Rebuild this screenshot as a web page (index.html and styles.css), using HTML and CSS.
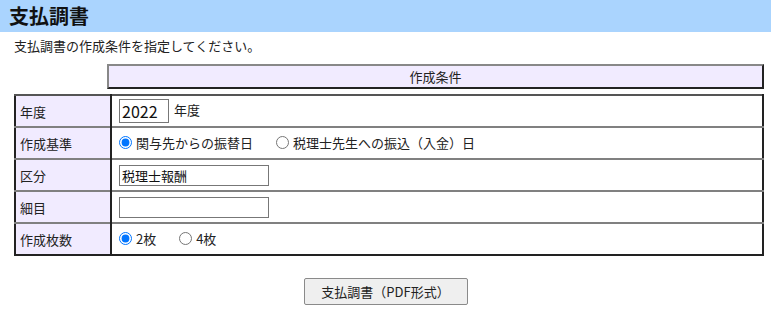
FILE: index.html
```html
<!DOCTYPE html>
<html lang="ja">
<head>
    <meta charset="UTF-8">
    <title>支払調書</title>
    <link rel="stylesheet" href="styles.css">
</head>
<body>
    <h1 class="page-title">支払調書</h1>
    <p class="lead">支払調書の作成条件を指定してください。</p>

    <div class="cond-head">作成条件</div>

    <table class="cond-table">
        <tr>
            <th>年度</th>
            <td><input type="text" class="year-input" value="2022"> 年度</td>
        </tr>
        <tr>
            <th>作成基準</th>
            <td>
                <label class="opt"><input type="radio" name="base" checked>関与先からの振替日</label>
                <label class="opt"><input type="radio" name="base">税理士先生への振込（入金）日</label>
            </td>
        </tr>
        <tr>
            <th>区分</th>
            <td><input type="text" class="text-input" value="税理士報酬"></td>
        </tr>
        <tr>
            <th>細目</th>
            <td><input type="text" class="text-input"></td>
        </tr>
        <tr>
            <th>作成枚数</th>
            <td>
                <label class="opt"><input type="radio" name="count" checked>2枚</label>
                <label class="opt"><input type="radio" name="count">4枚</label>
            </td>
        </tr>
    </table>

    <div class="actions">
        <button class="pdf-btn">支払調書（PDF形式）</button>
    </div>
</body>
</html>
```

FILE: styles.css
```css
* {
    box-sizing: border-box;
}

body {
    margin: 0;
    font-family: "Noto Sans CJK JP", "Noto Sans", sans-serif;
    font-size: 13px;
    color: #222;
    background: #fff;
}

.page-title {
    margin: 0;
    height: 32px;
    padding-left: 9px;
    background: #aad4fe;
    font-size: 20px;
    line-height: 32px;
    font-weight: bold;
    color: #111;
}

.lead {
    margin: 4px 0 0 14px;
    line-height: 20px;
}

.cond-head {
    margin: 8px 7px 0 107px;
    height: 25px;
    line-height: 21px;
    background: #f1ebff;
    border: 2px solid #222;
    border-top-color: #888;
    border-left-color: #888;
    text-align: center;
}

.cond-table {
    margin: 5px 7px 0 14px;
    width: calc(100% - 21px);
    border-collapse: collapse;
    border: 2px solid #222;
    border-top-color: #555;
}

.cond-table th,
.cond-table td {
    height: 32px;
    padding: 0 7px;
    border-top: 2px solid #808080;
    text-align: left;
    font-weight: normal;
}

.cond-table tr:first-child th,
.cond-table tr:first-child td {
    border-top: none;
}

.cond-table th {
    width: 96px;
    padding-left: 4px;
    background: #f1ebff;
    border-right: 2px solid #222;
}

.year-input,
.text-input {
    font-family: inherit;
    color: #111;
    border: 1px solid #777;
    padding: 0 2px;
    vertical-align: middle;
}

.year-input {
    width: 50px;
    height: 24px;
    font-size: 16px;
    margin-right: 2px;
}

.text-input {
    width: 150px;
    height: 21px;
    font-size: 13px;
}

.opt {
    display: inline-flex;
    align-items: center;
    margin-right: 20px;
}

.opt input {
    width: 13px;
    height: 13px;
    margin: 0 4px 0 0;
}

.actions {
    display: flex;
    justify-content: center;
    margin-top: 22px;
}

.pdf-btn {
    width: 164px;
    height: 27px;
    font-family: inherit;
    font-size: 13px;
    color: #222;
    background: #efefef;
    border: 1px solid #8a8a8a;
    border-radius: 2px;
}
```
